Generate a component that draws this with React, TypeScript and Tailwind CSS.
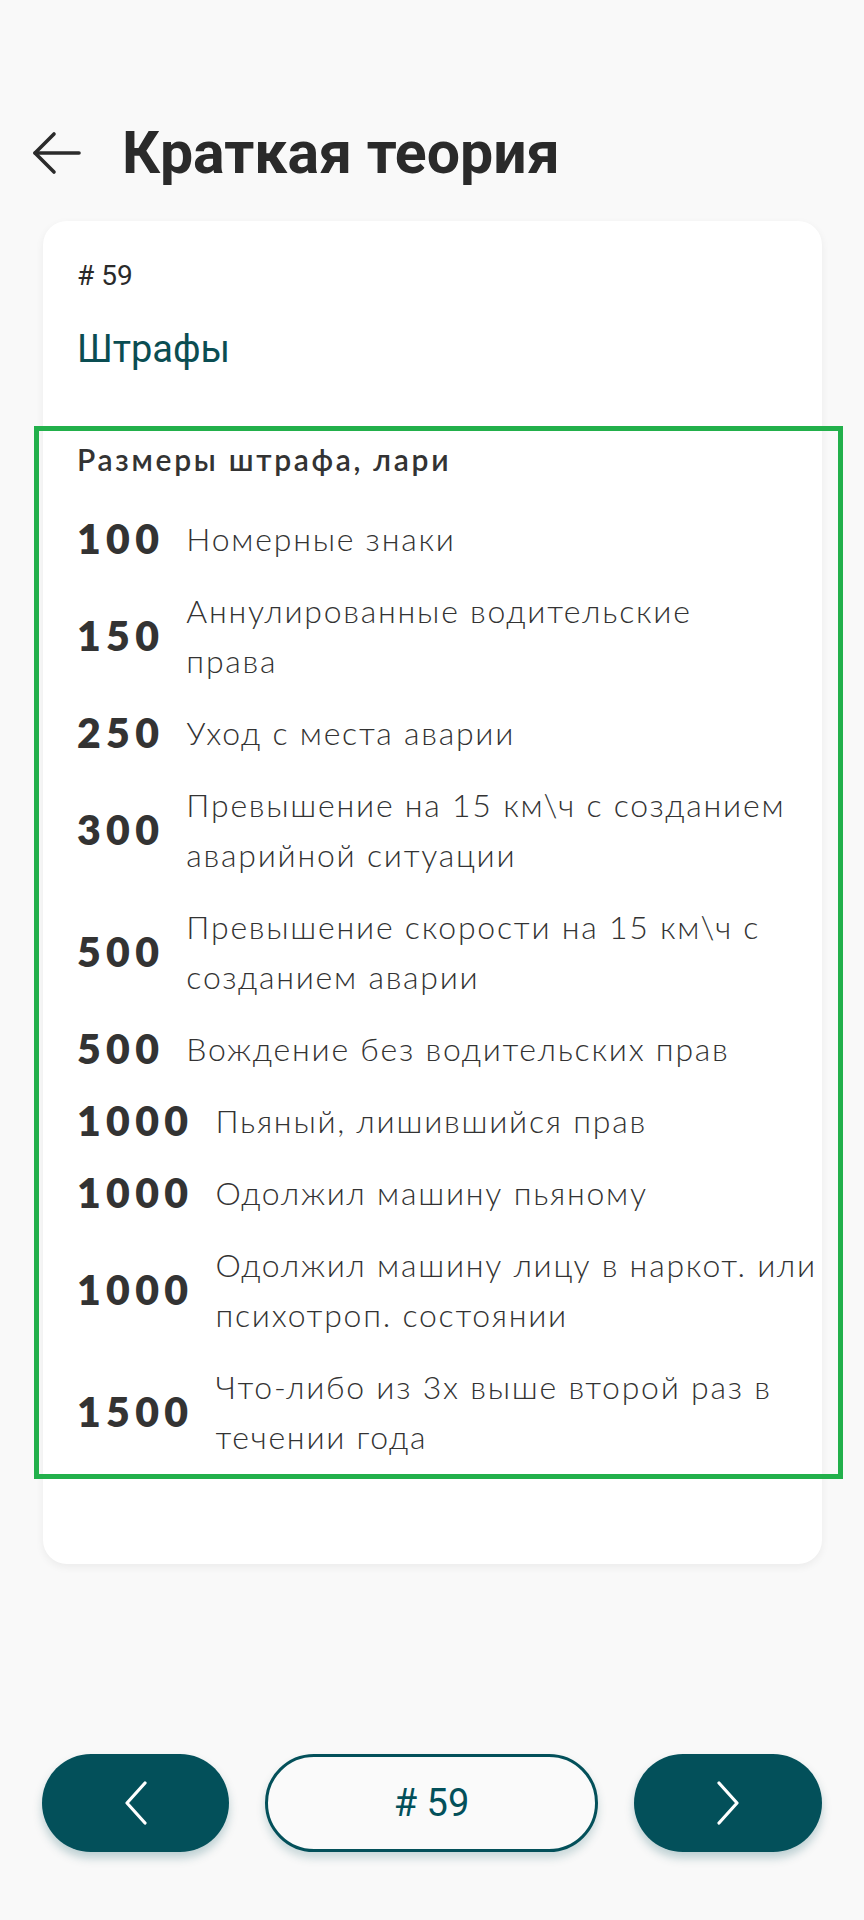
const fines = [
  { sum: "100", lines: ["Номерные знаки"] },
  { sum: "150", lines: ["Аннулированные водительские", "права"] },
  { sum: "250", lines: ["Уход с места аварии"] },
  { sum: "300", lines: ["Превышение на 15 км\\ч с созданием", "аварийной ситуации"] },
  { sum: "500", lines: ["Превышение скорости на 15 км\\ч с", "созданием аварии"] },
  { sum: "500", lines: ["Вождение без водительских прав"] },
  { sum: "1000", lines: ["Пьяный, лишившийся прав"] },
  { sum: "1000", lines: ["Одолжил машину пьяному"] },
  { sum: "1000", lines: ["Одолжил машину лицу в наркот. или", "психотроп. состоянии"] },
  { sum: "1500", lines: ["Что-либо из 3х выше второй раз в", "течении года"] },
];

const App = () => {
  return (
    <div className="min-h-[1920px] bg-[#f9f9f9] flex flex-col font-['Roboto',sans-serif]">
      {/* top bar */}
      <div className="flex items-center pt-[117px] pl-[32px] h-[189px]">
        <svg width="50" height="44" viewBox="0 0 50 44" fill="none" stroke="#2b2b2b" strokeWidth="3.6" strokeLinecap="round" strokeLinejoin="round">
          <path d="M3 22 H47" />
          <path d="M22 3 L3 22 L22 41" />
        </svg>
        <h1 className="ml-[40px] text-[59px] leading-[72px] font-bold text-[#2a2a2a]">Краткая теория</h1>
      </div>

      <div className="mt-[32px] ml-[43px] w-[779px] bg-white rounded-[24px] shadow-[0_3px_8px_rgba(0,0,0,0.06)] pb-[85px]">
        <div className="px-[34px] pt-[39px]">
          <p className="text-[28px] leading-[32px] text-[#2a2a2a]"># 59</p>
          <p className="mt-[33px] text-[38px] leading-[48px] text-[#0a4d52]">Штрафы</p>
        </div>

        <div className="mt-[53px] -ml-[9px] w-[809px] border-[5px] border-[#22b04b] pl-[38px] pt-[11px] pb-[1px] font-['Lato','Open_Sans',sans-serif] text-[#333333]">
          <h2 className="text-[30px] leading-[34px] font-semibold tracking-[0.09em] mb-[27px]">Размеры штрафа, лари</h2>
          {fines.map((f, i) => (
            <div key={i} className="flex items-center gap-[22px] py-[11px]">
              <span className="text-[41px] leading-[50px] font-extrabold tracking-[0.13em]">{f.sum}</span>
              <div className="text-[32px] leading-[50px] font-light tracking-[0.055em] whitespace-nowrap">
                {f.lines.map((l, j) => (
                  <div key={j}>{l}</div>
                ))}
              </div>
            </div>
          ))}
        </div>
      </div>

      {/* bottom nav */}
      <div className="mt-auto mb-[68px] flex items-center gap-[36px] px-[42px]">
        <button className="w-[188px] h-[98px] rounded-full bg-[#03505a] flex items-center justify-center shadow-[0_6px_10px_rgba(3,80,90,0.25)]">
          <svg width="24" height="44" viewBox="0 0 24 44" fill="none" stroke="#ffffff" strokeWidth="3.2" strokeLinecap="round" strokeLinejoin="round">
            <path d="M21 2 L3 22 L21 42" />
          </svg>
        </button>
        <button className="w-[333px] h-[98px] rounded-full border-[3px] border-[#03505a] bg-[#fafafa] text-[#03505a] text-[38px] flex items-center justify-center shadow-[0_6px_10px_rgba(3,80,90,0.2)]">
          # 59
        </button>
        <button className="w-[189px] h-[98px] rounded-full bg-[#03505a] flex items-center justify-center shadow-[0_6px_10px_rgba(3,80,90,0.25)]">
          <svg width="24" height="44" viewBox="0 0 24 44" fill="none" stroke="#ffffff" strokeWidth="3.2" strokeLinecap="round" strokeLinejoin="round">
            <path d="M3 2 L21 22 L3 42" />
          </svg>
        </button>
      </div>
    </div>
  );
};

export default App;
